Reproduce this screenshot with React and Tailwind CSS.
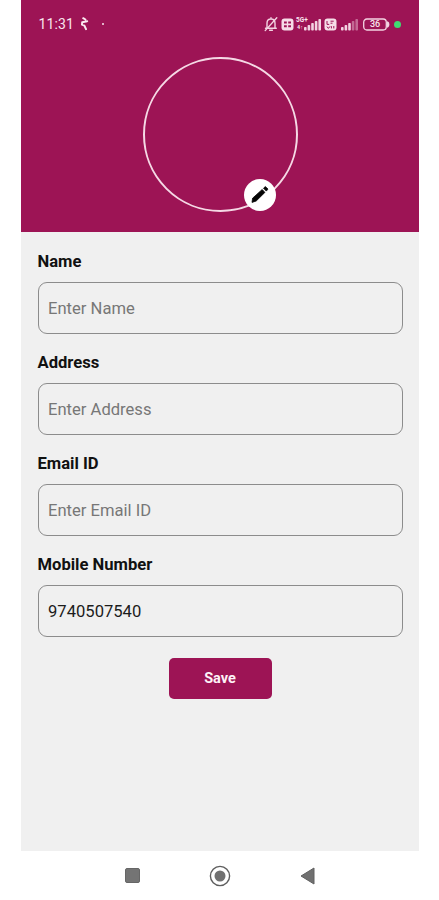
import React from 'react';

const fields = [
  { id: 'name', label: 'Name', placeholder: 'Enter Name' },
  { id: 'address', label: 'Address', placeholder: 'Enter Address' },
  { id: 'email', label: 'Email ID', placeholder: 'Enter Email ID' },
  { id: 'mobile', label: 'Mobile Number', value: '9740507540' },
];

const BellOffIcon = () => (
  <svg width="14" height="16" viewBox="0 0 14 16" fill="none" stroke="#f3d3e2" strokeWidth="1.4" strokeLinecap="round">
    <path d="M1.5 12.2h10.8M3 12V7.2C3 4.6 4.5 3 7 3s4 1.6 4 4.2V12M5.6 14.2h2.8M7 1.8V3" />
    <path d="M12.8 1.8 1.2 14.6" />
  </svg>
);

const SimBadge = () => (
  <svg width="13" height="13" viewBox="0 0 13 13">
    <rect x="0.5" y="0.5" width="12" height="12" rx="3" fill="#f6dde8" />
    <path d="M3 3.5h2.8v2H3zM7.2 3.5H10v2H7.2zM3 7.3h2.8v2H3zM7.2 7.3H10v2H7.2z" fill="#9d1455" />
  </svg>
);

const VolteBadge = () => (
  <svg width="13" height="13" viewBox="0 0 13 13">
    <rect x="0.5" y="0.5" width="12" height="12" rx="3" fill="#f6dde8" />
    <path d="M3 3v3.4h2.2M6.5 3.2h3.2M6.5 5.2h2M3 8.6l1.4 1.8L6 8.4M7.4 8.2v2.2M9.8 8v2.4" fill="none" stroke="#9d1455" strokeWidth="1" />
  </svg>
);

const SignalIcon = ({ full }) => (
  <svg width="18" height="13" viewBox="0 0 18 13" fill="#f3d3e2">
    <rect x="0" y="9" width="2.6" height="3.5" rx="0.8" />
    <rect x="3.6" y="7" width="2.6" height="5.5" rx="0.8" />
    <rect x="7.2" y="5" width="2.6" height="7.5" rx="0.8" />
    <rect x="10.8" y="3" width="2.6" height="9.5" rx="0.8" opacity={full ? 1 : 0.45} />
    <rect x="14.4" y="1" width="2.6" height="11.5" rx="0.8" opacity={full ? 1 : 0.45} />
  </svg>
);

const StatusBar = () => (
  <div className="flex h-12 items-center pl-[17.5px] pr-[17px] text-[#f9e6ee]">
    <span className="w-[35px] text-[14px] leading-none tracking-[0.1px]">11:31</span>
    <svg className="ml-[6px]" width="9" height="14" viewBox="0 0 9 14" fill="none" stroke="#fbeaf1" strokeWidth="2" strokeLinecap="round" strokeLinejoin="round">
      <path d="M3.2 1.2 5.4 2.5M7.2 4.2 2.2 5.2 2 7.6 4.4 8.6 6 12.2" />
    </svg>
    <span className="ml-[13px] size-[2px] rounded-full bg-[#f9e6ee]" />
    <div className="ml-auto flex items-center">
      <BellOffIcon />
      <div className="ml-[3px]"><SimBadge /></div>
      <div className="relative ml-[10px]">
        <SignalIcon full />
        <span className="absolute -left-[8px] -top-px text-[6.5px] font-bold leading-[6px]">5G+</span>
        <span className="absolute -left-[7px] top-[7px] text-[5.5px] font-bold leading-[5px]">4↑</span>
      </div>
      <div className="ml-[2px]"><VolteBadge /></div>
      <div className="ml-[4px]"><SignalIcon /></div>
      <div className="relative ml-[4px] h-[13px] w-[27px]">
        <svg width="27" height="13" viewBox="0 0 27 13" fill="none" stroke="#f3d3e2" strokeWidth="1.3">
          <rect x="0.7" y="1" width="22.6" height="11" rx="3.2" />
          <path d="M24.6 4.2c1.6.8 1.6 3.8 0 4.6z" fill="#f3d3e2" />
        </svg>
        <span className="absolute left-0 top-[2px] w-6 text-center text-[9px] font-medium leading-[9px]">36</span>
      </div>
      <span className="ml-[4px] mr-px size-[7px] rounded-full bg-[#3fdc72]" />
    </div>
  </div>
);

const Avatar = () => (
  <div className="relative mx-auto mt-[9px] size-[155px] rounded-full border-2 border-[#f5d9e5]">
    <button className="absolute left-[99px] top-[120px] flex size-[32px] items-center justify-center rounded-full bg-white" aria-label="Edit photo">
      <svg width="32" height="32" viewBox="0 0 32 32">
        <path d="M8 23.4 8.6 19.2 18.2 10.5 20.9 13.4 12.2 22Z" fill="#050505" stroke="#050505" strokeWidth="0.8" strokeLinejoin="round" />
        <path d="M19.5 9.2 21.3 7.6 24 10.1 22.3 12.1Z" fill="#050505" stroke="#050505" strokeWidth="0.8" strokeLinejoin="round" />
      </svg>
    </button>
  </div>
);

const Field = ({ id, label, placeholder, value }) => (
  <div className="mb-[18px]">
    <label htmlFor={id} className="block h-5 text-[16.6px] font-bold leading-[21px] text-[#111]">{label}</label>
    <input
      id={id}
      defaultValue={value}
      placeholder={placeholder}
      className="mt-[11px] block h-[52px] w-full rounded-[9px] border border-[#8c8c8c] bg-transparent px-[9.5px] text-[16.6px] text-[#1c1c1c] outline-none placeholder:text-[#777]"
    />
  </div>
);

const NavBar = () => (
  <div className="flex h-[49px] items-center bg-white pl-[104px]">
    <svg width="15" height="15" viewBox="0 0 15 15">
      <rect x="0.5" y="0.5" width="14" height="14" rx="1.5" fill="#747474" stroke="#666" />
    </svg>
    <svg className="ml-[69px]" width="22" height="22" viewBox="0 0 22 22">
      <circle cx="11" cy="11" r="9.6" fill="none" stroke="#5e5e5e" strokeWidth="1.4" />
      <circle cx="11" cy="11" r="5.5" fill="#707070" />
    </svg>
    <svg className="ml-[69px]" width="15" height="18" viewBox="0 0 15 18">
      <path d="M1 9 14 1v16z" fill="#707070" stroke="#606060" strokeLinejoin="round" />
    </svg>
  </div>
);

const App = () => {
  return (
    <div className="h-[900px] w-full bg-white font-['Roboto','Liberation_Sans',sans-serif]">
      <div className="ml-[21px] flex h-full w-[398px] flex-col">
        <header className="h-[232px] shrink-0 bg-[#9d1455]">
          <StatusBar />
          <Avatar />
        </header>
        <main className="flex-1 bg-[#f0f0f0] px-[16.5px] pt-[19px]">
          {fields.map((field) => (
            <Field key={field.id} {...field} />
          ))}
          <button className="mx-auto mt-[21px] block h-[41px] w-[103px] rounded-[5px] bg-[#9d1455] pt-px text-[14.5px] font-bold text-[#fdf2f7]">
            Save
          </button>
        </main>
        <NavBar />
      </div>
    </div>
  );
};

export default App;
